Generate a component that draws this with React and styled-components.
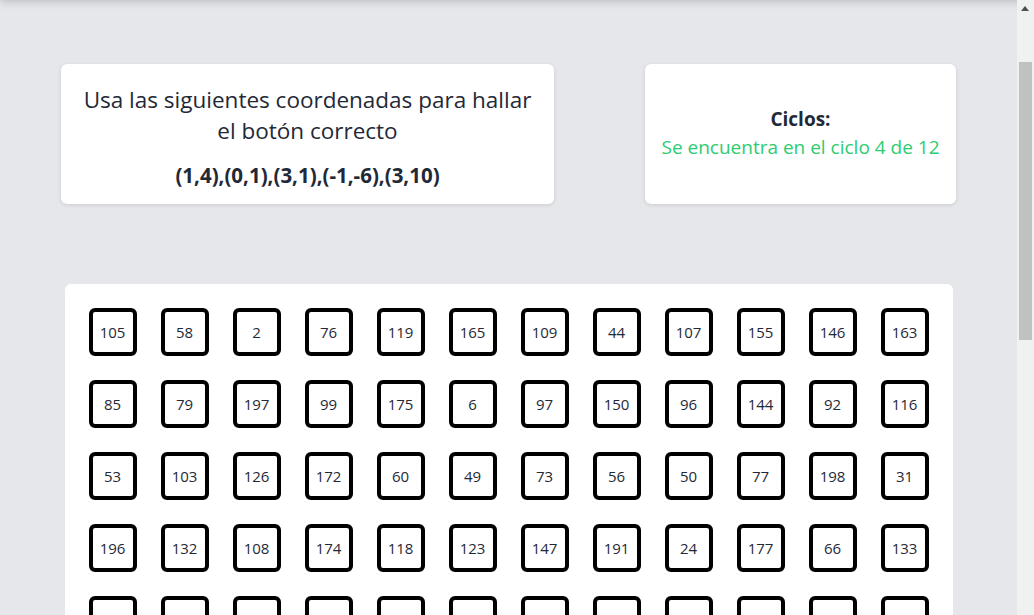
import { useLayoutEffect } from "react";
import styled, { createGlobalStyle } from "styled-components";

const GlobalStyle = createGlobalStyle`
  html, body {
    margin: 0;
    padding: 0;
    background: #e5e7eb;
    font-family: "Open Sans", "Noto Sans", sans-serif;
    color: #1f2937;
  }
`;

const Header = styled.header`
  height: 99px;
  background: #ffffff;
  box-shadow: 0 2px 8px rgba(0, 0, 0, 0.18);
  position: relative;
  z-index: 1;
`;

const Main = styled.main`
  padding: 64px 17px 40px 0;
  display: flex;
  flex-direction: column;
  align-items: center;
  gap: 80px;
`;

const TopRow = styled.div`
  width: 895px;
  display: flex;
  justify-content: space-between;
`;

const Card = styled.div`
  width: ${({ $w }) => $w}px;
  height: 140px;
  box-sizing: border-box;
  background: #ffffff;
  border-radius: 6px;
  box-shadow: 0 1px 4px rgba(0, 0, 0, 0.12);
  display: flex;
  flex-direction: column;
  align-items: center;
  justify-content: center;
  text-align: center;
  padding: ${({ $pad }) => $pad};
`;

const Title = styled.h2`
  margin: 0 0 15px;
  font-size: 22.5px;
  line-height: 31px;
  font-weight: 400;
  color: #1f2937;
`;

const Coords = styled.p`
  margin: 0;
  font-size: 20.5px;
  line-height: 28px;
  font-weight: 700;
  color: #1f2937;
`;

const CycleLabel = styled.p`
  margin: 0;
  font-size: 19px;
  line-height: 28px;
  font-weight: 700;
  color: #1f2937;
`;

const CycleText = styled.p`
  margin: 0;
  font-size: 19px;
  line-height: 28px;
  color: #2ecc71;
`;

const Panel = styled.section`
  width: 888px;
  box-sizing: border-box;
  background: #ffffff;
  border-radius: 6px;
  padding: 24px;
  display: grid;
  grid-template-columns: repeat(12, 48px);
  gap: 24px;
`;

const NumButton = styled.button`
  width: 48px;
  height: 48px;
  box-sizing: border-box;
  border: 4px solid #000000;
  border-radius: 6px;
  background: #ffffff;
  padding: 0;
  font-family: "Open Sans", "Noto Sans", sans-serif;
  font-size: 15px;
  color: #1f2937;
  cursor: pointer;
`;

/* stand-in for the browser scrollbar seen in the screenshot */
const ScrollTrack = styled.div`
  position: fixed;
  top: 0;
  right: 0;
  bottom: 0;
  width: 17px;
  background: #f1f1f1;
  z-index: 5;
`;

const ScrollArrow = styled.div`
  position: absolute;
  top: 6px;
  left: 4px;
  width: 0;
  height: 0;
  border-left: 4px solid transparent;
  border-right: 4px solid transparent;
  border-bottom: 5px solid #505050;
`;

const ScrollThumb = styled.div`
  position: absolute;
  top: 62px;
  left: 2px;
  width: 13px;
  height: 278px;
  background: #c1c1c1;
`;

const visibleRows = [
  [105, 58, 2, 76, 119, 165, 109, 44, 107, 155, 146, 163],
  [85, 79, 197, 99, 175, 6, 97, 150, 96, 144, 92, 116],
  [53, 103, 126, 172, 60, 49, 73, 56, 50, 77, 198, 31],
  [196, 132, 108, 174, 118, 123, 147, 191, 24, 177, 66, 133],
];

const buildNumbers = () => {
  const out = visibleRows.flat();
  let seed = 17;
  while (out.length < 144) {
    seed = (seed * 73 + 41) % 199;
    out.push(seed + 1);
  }
  return out;
};

const numbers = buildNumbers();

export default function App() {
  useLayoutEffect(() => {
    window.scrollTo(0, 99);
  }, []);

  return (
    <>
      <GlobalStyle />
      <Header />
      <Main>
        <TopRow>
          <Card $w={493} $pad="4px 20px 0">
            <Title>Usa las siguientes coordenadas para hallar el botón correcto</Title>
            <Coords>(1,4),(0,1),(3,1),(-1,-6),(3,10)</Coords>
          </Card>
          <Card $w={311} $pad="0 10px 2px">
            <CycleLabel>Ciclos:</CycleLabel>
            <CycleText>Se encuentra en el ciclo 4 de 12</CycleText>
          </Card>
        </TopRow>
        <Panel>
          {numbers.map((n, i) => (
            <NumButton key={i}>{n}</NumButton>
          ))}
        </Panel>
      </Main>
      <ScrollTrack>
        <ScrollArrow />
        <ScrollThumb />
      </ScrollTrack>
    </>
  );
}
